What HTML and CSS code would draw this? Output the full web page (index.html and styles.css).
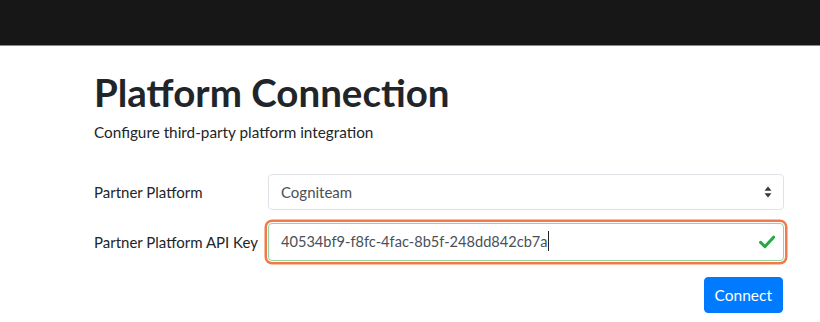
FILE: index.html
```html
<!DOCTYPE html>
<html lang="en">
<head>
    <meta charset="UTF-8">
    <meta name="viewport" content="width=device-width, initial-scale=1.0">
    <title>Platform Connection</title>
    <link rel="stylesheet" href="styles.css">
</head>
<body>
    <nav class="topbar"></nav>

    <main class="page">
        <h1 class="page-title">Platform Connection</h1>
        <p class="page-subtitle">Configure third-party platform integration</p>

        <form class="settings-form">
            <div class="form-row">
                <label class="form-label" for="platform">Partner Platform</label>
                <div class="field">
                    <select id="platform" class="form-control form-select">
                        <option>Cogniteam</option>
                    </select>
                    <svg class="select-caret" width="8" height="12" viewBox="0 0 8 12">
                        <path d="M4 0.5 L7.5 4.8 H0.5 Z M4 11.5 L7.5 7.2 H0.5 Z" fill="#343a40"/>
                    </svg>
                </div>
            </div>

            <div class="form-row">
                <label class="form-label" for="apikey">Partner Platform API Key</label>
                <div class="field">
                    <div id="apikey" class="form-control is-valid focused">
                        <span class="input-value">40534bf9-f8fc-4fac-8b5f-248dd842cb7a</span><span class="text-caret"></span>
                    </div>
                    <svg class="valid-icon" width="16" height="14" viewBox="0 0 16 14">
                        <path d="M1.6 7.4 L6 11.6 L14.6 2.2" fill="none" stroke="#28a745" stroke-width="3" stroke-linecap="round" stroke-linejoin="round"/>
                    </svg>
                </div>
            </div>

            <div class="form-actions">
                <button type="button" class="btn-primary">Connect</button>
            </div>
        </form>
    </main>
</body>
</html>
```

FILE: styles.css
```css
body {
    margin: 0;
    background-color: #fff;
    color: #212529;
    font-family: 'Lato', 'Open Sans', sans-serif;
    font-size: 16px;
    line-height: 1.5;
}

.topbar {
    height: 45px;
    background-color: #171717;
    border-bottom: 1px solid #8a8a8a;
}

.page {
    padding: 0 36px 0 94px;
}

.page-title {
    margin: 23px 0 0;
    font-size: 38.5px;
    font-weight: 700;
    line-height: 1.2;
}

.page-subtitle {
    margin: 6px 0 0;
    font-size: 15.3px;
}

.settings-form {
    margin-top: 30px;
}

.form-row {
    display: grid;
    grid-template-columns: 174px 1fr;
    align-items: center;
    margin-bottom: 13px;
}

.form-label {
    font-size: 15px;
}

.field {
    position: relative;
}

.form-control {
    box-sizing: border-box;
    display: block;
    width: 100%;
    height: 36px;
    padding: 6px 12px;
    font-family: inherit;
    font-size: 15px;
    color: #495057;
    background-color: #fff;
    border: 1px solid #dee2e6;
    border-radius: 4px;
}

.form-select {
    appearance: none;
    -webkit-appearance: none;
}

.select-caret {
    position: absolute;
    right: 12px;
    top: 12px;
}

.is-valid {
    height: 38px;
    font-size: 14.6px;
    border-color: #93d4a3;
}

.focused {
    box-shadow: 0 0 0 1px #fff, 0 0 0 3.5px #f27a48;
}

.input-value {
    line-height: 24px;
}

.text-caret {
    display: inline-block;
    width: 1px;
    height: 20px;
    background-color: #212529;
    vertical-align: -4px;
}

.valid-icon {
    position: absolute;
    right: 9px;
    top: 12px;
}

.form-actions {
    display: flex;
    justify-content: flex-end;
    margin-top: 16px;
}

.btn-primary {
    height: 36px;
    margin-right: 1px;
    padding: 0 10px;
    font-family: inherit;
    font-size: 15.5px;
    color: #fff;
    background-color: #007bff;
    border: 1px solid #007bff;
    border-radius: 4px;
}
```
